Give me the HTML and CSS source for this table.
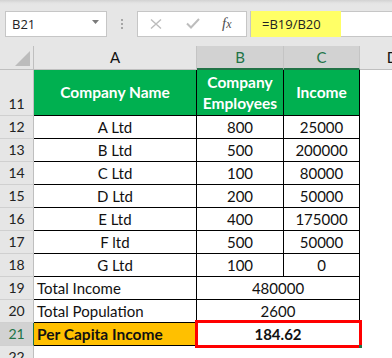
FILE: index.html
```html
<!DOCTYPE html>
<html>
<head>
<meta charset="utf-8">
<link rel="stylesheet" href="styles.css">
</head>
<body>
<div class="app">
  <div class="toolbar">
    <div class="namebox">
      <span class="nb-text">B21</span>
      <svg class="nb-arrow" width="8" height="5" viewBox="0 0 8 5"><polygon points="0,0 7,0 3.5,4" fill="#7a7a7a"/></svg>
    </div>
    <div class="dots">
      <svg width="3" height="12" viewBox="0 0 3 12"><rect x="0" y="0" width="2" height="2" fill="#a6a6a6"/><rect x="0" y="4" width="2" height="2" fill="#a6a6a6"/><rect x="0" y="8" width="2" height="2" fill="#a6a6a6"/></svg>
    </div>
    <div class="fxbox">
      <svg class="ic-x" width="12" height="10" viewBox="0 0 12 10"><path d="M1 0.5 L11 9.5 M11 0.5 L1 9.5" stroke="#bdbdbd" stroke-width="1.4" fill="none"/></svg>
      <svg class="ic-ok" width="14" height="11" viewBox="0 0 14 11"><path d="M1 5.5 L5 9.5 L13 1" stroke="#bdbdbd" stroke-width="2" fill="none"/></svg>
      <span class="fx"><i>f</i><i class="fx-x">x</i></span>
    </div>
    <div class="formula"><span class="hl">=B19/B20</span></div>
  </div>

  <div class="sheet">
    <div class="corner"><svg width="34" height="24" viewBox="0 0 34 24"><polygon points="15,20 30,20 30,5" fill="#bcbcbc"/></svg></div>
    <div class="ch">A</div>
    <div class="ch sel">B</div>
    <div class="ch sel">C</div>
    <div class="ch">D</div>

    <div class="rh bottom">11</div>
    <div class="c head">Company Name</div>
    <div class="c head">Company<br>Employees</div>
    <div class="c head">Income</div>
    <div class="e"></div>

    <div class="rh">12</div><div class="c">A Ltd</div><div class="c">800</div><div class="c">25000</div><div class="e"></div>
    <div class="rh">13</div><div class="c">B Ltd</div><div class="c">500</div><div class="c">200000</div><div class="e"></div>
    <div class="rh">14</div><div class="c">C Ltd</div><div class="c">100</div><div class="c">80000</div><div class="e"></div>
    <div class="rh">15</div><div class="c">D Ltd</div><div class="c">200</div><div class="c">50000</div><div class="e"></div>
    <div class="rh">16</div><div class="c">E Ltd</div><div class="c">400</div><div class="c">175000</div><div class="e"></div>
    <div class="rh">17</div><div class="c">F ltd</div><div class="c">500</div><div class="c">50000</div><div class="e"></div>
    <div class="rh">18</div><div class="c">G Ltd</div><div class="c">100</div><div class="c">0</div><div class="e"></div>

    <div class="rh">19</div><div class="c left">Total Income</div><div class="c span2">480000</div><div class="e"></div>
    <div class="rh">20</div><div class="c left">Total Population</div><div class="c span2">2600</div><div class="e"></div>
    <div class="rh rsel">21</div><div class="c left orange">Per Capita Income</div>
    <div class="c span2 bold result">184.62<span class="selbox"></span><span class="handle"></span></div><div class="e"></div>

    <div class="rh">22</div><div class="e"></div><div class="e"></div><div class="e"></div><div class="e"></div>
  </div>
</div>
</body>
</html>
```

FILE: styles.css
```css
* { box-sizing: border-box; }
html, body { margin: 0; padding: 0; }
body {
  width: 392px;
  height: 358px;
  overflow: hidden;
  background: #ffffff;
  font-family: Lato, "Open Sans", sans-serif;
}
.app { width: 392px; }

.toolbar {
  height: 46px;
  background: linear-gradient(#d2d2d2 0px, #e3e3e3 3px, #e6e6e6 5px);
  display: flex;
  align-items: flex-start;
  padding-top: 11px;
  padding-left: 5px;
}
.namebox {
  width: 102px;
  height: 26px;
  background: #fff;
  border: 1px solid #c6c6c6;
  display: flex;
  align-items: center;
  justify-content: space-between;
  padding: 0 6px 0 6px;
  font-family: "Open Sans", sans-serif;
  font-size: 13px;
  color: #222;
}
.nb-text { margin-top: -1px; }
.nb-arrow { margin-top: -3px; }
.dots {
  width: 30px;
  height: 26px;
  display: flex;
  align-items: center;
  justify-content: center;
  padding-top: 1px;
  padding-left: 1px;
}
.fxbox {
  width: 110px;
  height: 26px;
  background: #fff;
  border: 1px solid #c6c6c6;
  display: flex;
  align-items: center;
  padding-left: 12px;
}
.ic-ok { margin-left: 24px; margin-top: -1px; }
.fx {
  margin-left: 22px;
  font-family: "Liberation Serif", serif;
  font-size: 15px;
  color: #505050;
  margin-top: -2px;
}
.fx-x { font-size: 12px; }
.formula {
  flex: 1;
  height: 26px;
  margin-left: 3px;
  background: #fff;
  border: 1px solid #c6c6c6;
  border-right: none;
  display: flex;
}
.hl {
  width: 90px;
  margin-top: -1px;
  margin-bottom: -1px;
  background: #ffff66;
  font-family: "Open Sans", sans-serif;
  font-size: 13px;
  color: #222;
  padding-left: 11px;
  line-height: 26px;
}

.sheet {
  display: grid;
  grid-template-columns: 34px 163px 87px 76px 66px;
  grid-template-rows: 24px 46px repeat(11, 23px);
  font-size: 15px;
  color: #111;
}
.corner {
  background: #e6e6e6;
  border-right: 1px solid #bfbfbf;
  border-bottom: 1px solid #bfbfbf;
}
.corner svg { display: block; }
.ch {
  background: #e6e6e6;
  border-right: 1px solid #c4c4c4;
  border-bottom: 1px solid #bfbfbf;
  text-align: center;
  line-height: 23px;
  color: #111;
}
.ch.sel {
  background: #d2d2d2;
  border-bottom: 2px solid #217346;
  color: #217346;
  line-height: 22px;
}
.rh {
  background: #e6e6e6;
  border-right: 1px solid #bfbfbf;
  border-bottom: 1px solid #d0d0d0;
  text-align: center;
  font-size: 14px;
  line-height: 22px;
  color: #222;
}
.rh.bottom { display: flex; align-items: flex-end; justify-content: center; }
.rh.rsel {
  background: #d2d2d2;
  color: #217346;
  border-right: 1px solid #217346;
}
.c {
  border-right: 1px solid #000;
  border-bottom: 1px solid #000;
  text-align: center;
  line-height: 22px;
  white-space: nowrap;
  background: #fff;
}
.c.head {
  background: #00b050;
  color: #fff;
  font-weight: bold;
  font-size: 15.5px;
  line-height: 21px;
  display: flex;
  align-items: center;
  justify-content: center;
  text-align: center;
}
.c.left { text-align: left; padding-left: 3px; }
.c.span2 { grid-column: span 2; }
.c.orange { background: #ffc000; font-weight: bold; font-size: 15.5px; }
.c.bold { font-weight: bold; }
.result { position: relative; }
.selbox {
  position: absolute;
  left: -2px;
  right: -3px;
  top: -3px;
  bottom: -3px;
  border: 3px solid #ff0000;
}
.handle {
  position: absolute;
  right: -3px;
  bottom: -3px;
  width: 3px;
  height: 3px;
  background: #217346;
}
.e { background: #fff; }
```
